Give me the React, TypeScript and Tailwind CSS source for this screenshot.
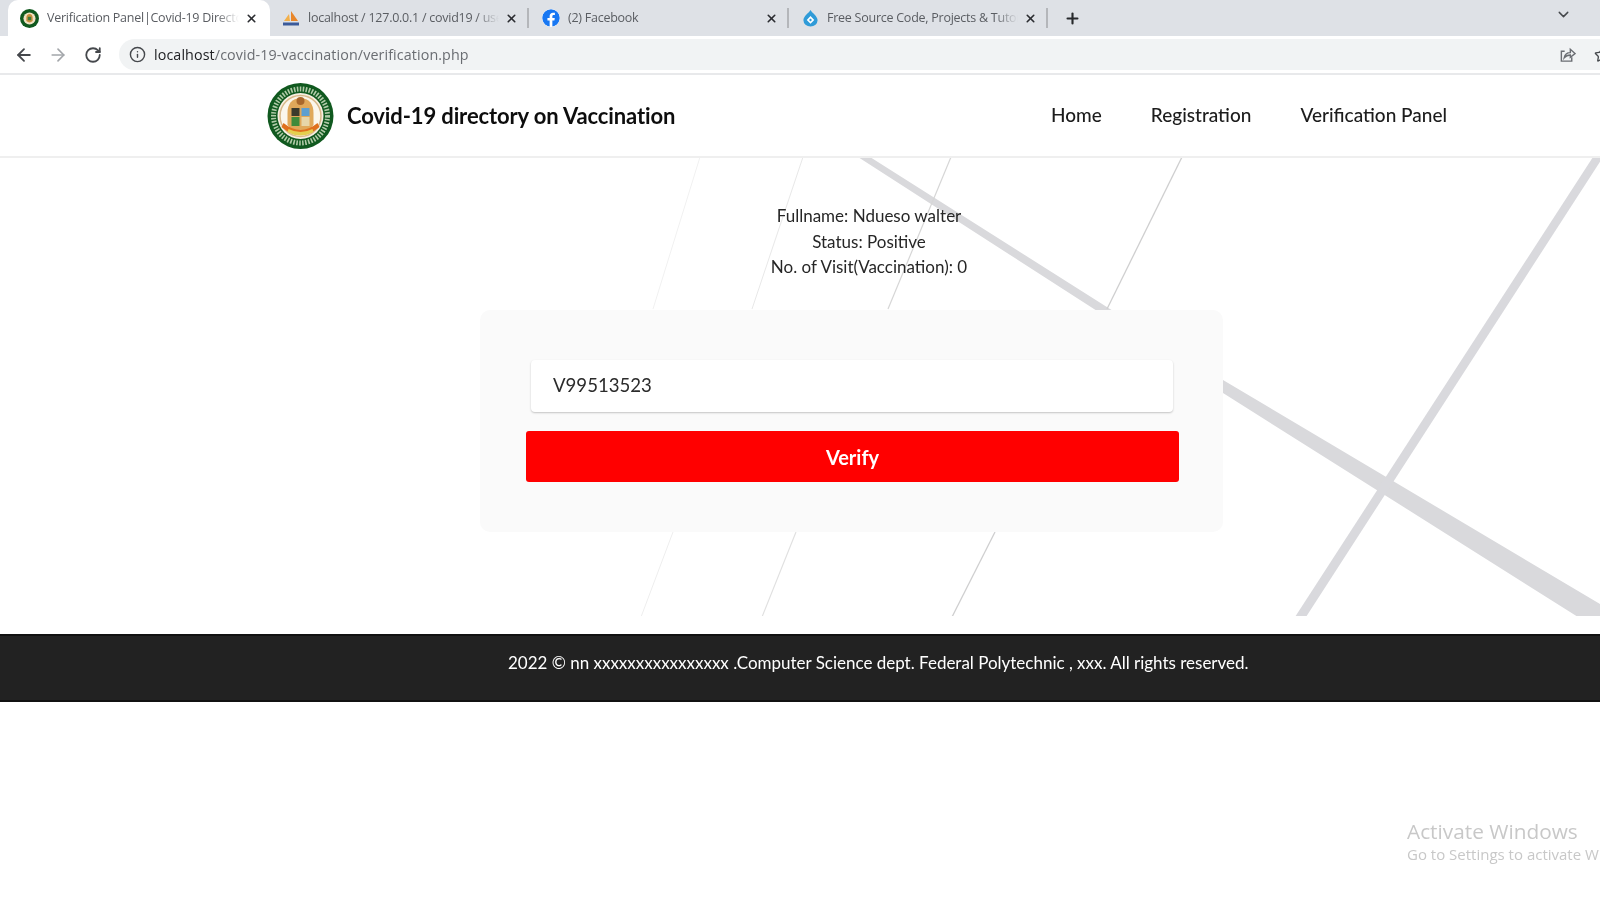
import { ArrowLeft, ArrowRight, RotateCw, Info, X, Plus, ChevronDown, Star } from "lucide-react";
import { FaFacebook } from "react-icons/fa";

const Seal = () => (
  <svg viewBox="0 0 66 66" className="w-[67px] h-[66px] shrink-0">
    <circle cx="33" cy="33" r="33" fill="#10591f" />
    <circle cx="33" cy="33" r="27" fill="none" stroke="#d8e6c9" strokeWidth="5" strokeDasharray="1.6 1.4" opacity="0.8" />
    <circle cx="33" cy="33" r="23" fill="#f7efe2" />
    <circle cx="33" cy="33" r="20.5" fill="#fbf6ec" stroke="#d9b98a" strokeWidth="1.5" />
    <path d="M20 30 Q20 16 33 15 Q46 16 46 30 L46 42 Q40 50 33 50 Q26 50 20 42 Z" fill="#e0a85a" />
    <rect x="24" y="25" width="8" height="8" fill="#3b3a2c" />
    <rect x="34" y="25" width="8" height="8" fill="#5d9fd0" />
    <rect x="24" y="34" width="8" height="9" fill="#3f8a3a" />
    <rect x="34" y="34" width="8" height="9" fill="#e7d5a8" />
    <circle cx="33" cy="18" r="4" fill="#a9682c" />
    <path d="M14 44 Q33 60 52 44 L50 40 Q33 54 16 40 Z" fill="#e0701d" />
    <path d="M20 49 Q33 56 46 49 L45 46 Q33 52 21 46 Z" fill="#e4cf4e" />
  </svg>
);

const Pma = () => (
  <svg viewBox="0 0 18 16" className="w-[18px] h-[16px] shrink-0">
    <path d="M2 11 L7 4 L8 11 Z" fill="#f3b04a" />
    <path d="M9 1 L16 11 L9 11 Z" fill="#e8862a" />
    <path d="M1 12.5 H17 V15.5 H1 Z" fill="#3b5a9a" />
  </svg>
);

const Drop = () => (
  <svg viewBox="0 0 18 18" className="w-[17px] h-[18px] shrink-0">
    <path d="M9 0.5 C11 4 16.5 7 16.5 11.5 A7.5 6.5 0 0 1 1.5 11.5 C1.5 7 7 4 9 0.5 Z" fill="#2f9bd8" />
    <path d="M9 7 L13 11 L9 15 L5 11 Z" fill="#ffffff" />
    <path d="M9 9.4 L10.6 11 L9 12.6 L7.4 11 Z" fill="#2f9bd8" />
  </svg>
);

const ShareBox = () => (
  <svg viewBox="0 0 18 18" className="w-[17px] h-[17px] shrink-0 ml-auto" fill="none" stroke="#6a6d72" strokeWidth="1.5">
    <path d="M6 5.5 H2.5 V16 H13.5 V12" />
    <path d="M5.5 12.5 Q6.5 7 12 7 V3.5 L17 8 L12 12 V9.5 Q8 9.5 5.5 12.5 Z" />
  </svg>
);

const tabs = [
  { icon: <svg viewBox="0 0 66 66" className="w-[19px] h-[19px] shrink-0"><circle cx="33" cy="33" r="33" fill="#10591f" /><circle cx="33" cy="33" r="21" fill="#f1e2c4" /><path d="M22 30 Q22 18 33 17 Q44 18 44 30 L44 42 Q33 52 22 42 Z" fill="#c9913f" /><rect x="27" y="27" width="12" height="12" fill="#3f7a3a" /></svg>, title: "Verification Panel|Covid-19 Directory", w: "w-[262px]", active: true, text: "w-[192px]" },
  { icon: <Pma />, title: "localhost / 127.0.0.1 / covid19 / users", w: "w-[260px]", active: false, text: "w-[191px]" },
  { icon: <FaFacebook className="w-[18px] h-[18px] text-[#1877f2] shrink-0 bg-white rounded-full" />, title: "(2) Facebook", w: "w-[260px]", active: false, text: "w-[191px]" },
  { icon: <Drop />, title: "Free Source Code, Projects & Tutorials", w: "w-[258px]", active: false, text: "w-[191px]" },
];

export default function App() {
  return (
    <div className="h-[900px] w-[1600px] overflow-hidden bg-white relative flex flex-col font-['Lato',sans-serif] blur-[0.4px]">
      {/* Browser chrome */}
      <div className="h-[36px] bg-[#dee1e6] flex items-end pl-[8px] shrink-0 font-['Open_Sans',sans-serif]">
        {tabs.map((t, i) => (
          <div key={i} className={`${t.w} h-[36px] flex items-center pl-[12px] shrink-0 ${t.active ? "bg-white rounded-t-[10px]" : ""}`}>
            {t.icon}
            <div className={`${t.text} ml-[8px] mr-[1px] overflow-hidden whitespace-nowrap text-[12.5px] tracking-[-0.25px] text-[#5a5d62] [mask-image:linear-gradient(to_right,black_88%,transparent)]`}>{t.title}</div>
            <X className="w-[13px] h-[13px] text-[#2a2c30] ml-[5px] shrink-0" strokeWidth={3} />
            {!t.active && <div className="w-[2px] h-[20px] bg-[#b4b6ba] ml-[9px] shrink-0" />}
          </div>
        ))}
        <div className="h-[36px] flex items-center ml-[16px]">
          <Plus className="w-[17px] h-[17px] text-[#27292c]" strokeWidth={3} />
        </div>
        <div className="ml-auto h-[30px] w-[45px] flex items-start justify-start">
          <ChevronDown className="w-[17px] h-[17px] text-[#45484c]" strokeWidth={2} />
        </div>
      </div>
      <div className="h-[39px] shrink-0 flex items-center border-b-2 border-[#e8e9eb] font-['Open_Sans',sans-serif] overflow-hidden">
        <ArrowLeft className="w-[20px] h-[20px] text-[#45484c] ml-[14px] shrink-0" strokeWidth={2.2} />
        <ArrowRight className="w-[20px] h-[20px] text-[#a3a6aa] ml-[14px] shrink-0" strokeWidth={2} />
        <RotateCw className="w-[18px] h-[18px] text-[#45484c] ml-[16px] shrink-0" strokeWidth={2.4} />
        <div className="ml-[17px] h-[31px] flex-1 bg-[#f1f3f4] rounded-l-[16px] flex items-center pl-[10px]">
          <Info className="w-[17px] h-[17px] text-[#45484c] shrink-0" strokeWidth={2} />
          <span className="ml-[8px] text-[14.3px] tracking-[0.1px] text-[#6a6d72] whitespace-nowrap"><span className="text-[#202124]">localhost</span>/covid-19-vaccination/verification.php</span>
          <ShareBox />
          <Star className="w-[16px] h-[16px] text-[#45484c] ml-[18px] mr-[-10px] shrink-0" strokeWidth={2} />
        </div>
      </div>

      {/* Site header */}
      <header className="h-[83px] shrink-0 flex items-center pl-[267px] border-b-2 border-[#efefef]">
        <Seal />
        <div className="ml-[13px] text-[22px] font-bold text-[#0d0d0d] tracking-[-0.12px] whitespace-nowrap">Covid-19 directory on Vaccination</div>
        <nav className="ml-auto mr-[153px] flex gap-[49px] text-[19px] font-medium text-[#1c1c1c] whitespace-nowrap">
          <span>Home</span>
          <span>Registration</span>
          <span>Verification Panel</span>
        </nav>
      </header>

      {/* Main */}
      <main className="relative h-[458px] shrink-0 bg-white overflow-hidden">
        <svg className="absolute inset-0 w-[1600px] h-[458px]" viewBox="0 158 1600 458">
          <polygon points="870,157 1110,309 1223,380 1600,604 1600,617 1578,617 1223,393 1094,309 858,157" fill="#d9d9dc" />
          <polygon points="1593,157 1603,157 1306,617 1295,617" fill="#d9d9dd" />
          <line x1="1182" y1="157" x2="1107" y2="309" stroke="#cfcfd0" strokeWidth="1.3" />
          <line x1="951" y1="157" x2="888" y2="309" stroke="#d6d6d6" strokeWidth="1.2" />
          <line x1="803" y1="157" x2="752" y2="309" stroke="#e8e8e8" strokeWidth="1" />
          <line x1="700" y1="157" x2="653" y2="309" stroke="#f1f1f1" strokeWidth="1" />
          <line x1="995" y1="532" x2="952" y2="617" stroke="#cfcfd0" strokeWidth="1.3" />
          <line x1="796" y1="532" x2="762" y2="617" stroke="#e0e0e0" strokeWidth="1.1" />
          <line x1="673" y1="532" x2="641" y2="617" stroke="#eeeeee" strokeWidth="1" />
        </svg>
        <div className="relative flex flex-col">
          <div className="h-[152px] pt-[45px] ml-[669px] w-[400px] text-center text-[17px] leading-[25.5px] text-[#262626]">
            <p>Fullname: Ndueso walter</p>
            <p>Status: Positive</p>
            <p>No. of Visit(Vaccination): 0</p>
          </div>
          <div className="ml-[480px] w-[743px] h-[222px] bg-[#fafafa] rounded-[10px] pt-[50px] pl-[46px] flex flex-col items-start">
            <div className="ml-[5px] w-[642px] h-[52px] bg-white rounded-[4px] shadow-[0_1px_2px_rgba(0,0,0,0.22)] flex items-center pl-[22px] text-[18.6px] text-[#2b2b2b]">V99513523</div>
            <button className="mt-[19px] w-[653px] h-[51px] bg-[#ff0000] rounded-[3px] text-white text-[20px] font-bold flex items-center justify-center">Verify</button>
          </div>
        </div>
      </main>

      {/* Footer */}
      <footer className="mt-[18px] h-[68px] shrink-0 bg-[#222222] border-y-2 border-[#111111] pl-[508px] pt-[14px] text-[17px] tracking-[-0.01px] text-white whitespace-nowrap">
        2022 © nn xxxxxxxxxxxxxxxx .Computer Science dept. Federal Polytechnic , xxx. All rights reserved.
      </footer>

      {/* Watermark */}
      <div className="absolute left-[1407px] top-[818px] text-[#c8c8c8] whitespace-nowrap font-['Open_Sans',sans-serif]">
        <div className="text-[20.8px] leading-[26px]">Activate Windows</div>
        <div className="text-[15px] leading-[20px]">Go to Settings to activate Windows.</div>
      </div>
    </div>
  );
}
